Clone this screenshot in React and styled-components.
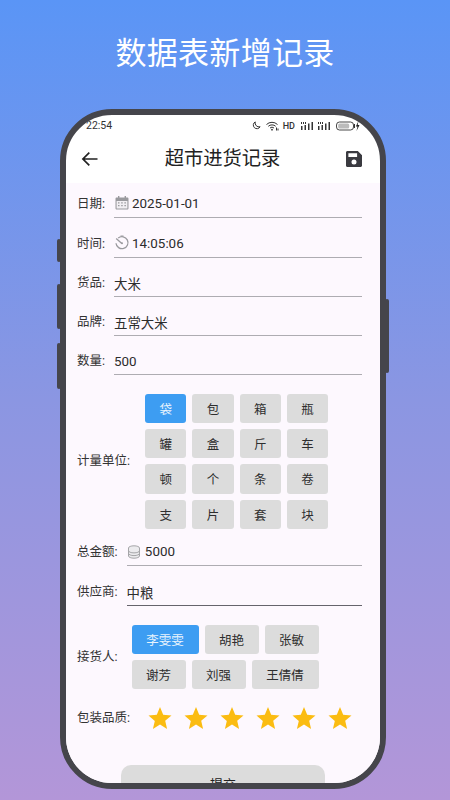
import React from 'react';
import styled, { createGlobalStyle } from 'styled-components';

const Global = createGlobalStyle`
  html, body { margin: 0; padding: 0; height: 800px; overflow: hidden; }
  body { font-family: Roboto, "Noto Sans CJK SC", sans-serif; }
  #root { height: 800px; }
`;
const Page = styled.div`
  width: 450px; height: 800px; overflow: hidden; box-sizing: border-box;
  background: linear-gradient(180deg, #5a95f6 0%, #8b96e2 50%, #b396d8 100%);
  display: flex; flex-direction: column; align-items: center;
`;
const Headline = styled.h1`
  margin: 0; height: 109px; line-height: 108px; font-size: 31px; font-weight: 400; color: #fff;
  letter-spacing: 0.3px; flex: none;
`;
const PhoneWrap = styled.div`
  position: relative; width: 326px; height: 680px; flex: none; margin-right: 4px;
`;
const SideKey = styled.div`
  position: absolute; width: 4px; background: #45454b; border-radius: 2px;
  top: ${p => p.$top}px; height: ${p => p.$h}px;
  ${p => p.$right ? 'right: -3px;' : 'left: -3px;'}
`;
const Phone = styled.div`
  position: relative; box-sizing: border-box; width: 326px; height: 680px; border: 6px solid #45454b;
  border-radius: 52px; background: #fff; overflow: hidden; display: flex; flex-direction: column;
`;
const Status = styled.div`
  height: 20px; flex: none; display: flex; align-items: center; justify-content: space-between;
  padding: 1px 20px 0 20px; box-sizing: border-box; font-size: 10.5px; color: #333;
`;
const StatusIcons = styled.div`display: flex; align-items: center; gap: 3px; color: #333;`;
const Hd = styled.span`font-size: 9px; font-weight: 500; margin: 0 2px 0 1px;`;
const Header = styled.div`
  height: 48px; flex: none; display: flex; align-items: center; justify-content: space-between;
  padding: 0 17px 0 15px; color: #222;
`;
const HeaderTitle = styled.div`font-size: 19.3px; color: #222; line-height: 48px; margin-left: 1px;`;
const Form = styled.div`
  flex: 1; background: #fdf8fe; padding: 0 18px 0 11px; display: flex; flex-direction: column; min-height: 0;
`;
const Row = styled.div`
  display: flex; align-items: ${p => p.$center ? 'center' : 'flex-end'}; margin-top: ${p => p.$top}px; flex: none;
`;
const Label = styled.div`
  font-size: 12.5px; color: #333; flex: none; margin-right: ${p => p.$gap}px;
  line-height: 18px; padding-bottom: ${p => p.$pb || 0}px;
`;
const Field = styled.div`
  flex: 1; height: 27px; box-sizing: border-box; border-bottom: ${p => p.$dark ? '1.5px solid #66646c' : '1px solid #aeacb2'};
  display: flex; align-items: center; gap: ${p => p.$icon ? 2 : 1}px; font-size: 13.4px; color: #2c2c2c;
  padding-bottom: ${p => p.$icon ? 2 : 0}px;
`;
const Chips = styled.div`display: flex; flex-direction: column; gap: 6px;`;
const ChipRow = styled.div`display: flex; gap: 6px;`;
const Chip = styled.div`
  width: ${p => p.$w}px; height: 29.2px; border-radius: 3px; display: flex; align-items: center; justify-content: center;
  font-size: 12.5px; background: ${p => p.$on ? '#3d9df2' : '#dcdcdc'}; color: ${p => p.$on ? '#e8f3fd' : '#2e2e2e'};
`;
const Stars = styled.div`display: flex; gap: 12px;`;
const Submit = styled.div`
  margin: 35px auto 0 44px; width: 204px; height: 44px; flex: none; border-radius: 10px; background: #dcdcdc;
  display: flex; justify-content: center; padding-top: 9px; box-sizing: border-box; font-size: 13px; color: #222;
`;

const Star = () => (
  <svg width="24" height="24" viewBox="0 0 24 24"><path fill="#fbbc12" d="M12 1l3.2 7.7 8.3.7-6.3 5.4 1.9 8.1L12 18.6 4.9 23l1.9-8.1L.5 9.4l8.3-.7z" /></svg>
);
const Calendar = () => (
  <svg width="16" height="16" viewBox="0 0 16 16"><path fill="#9a9a9e" d="M4 1h1.4v1.5h5.2V1H12v1.5h1.2c.8 0 1.3.5 1.3 1.3v9.4c0 .8-.5 1.3-1.3 1.3H2.8c-.8 0-1.3-.5-1.3-1.3V3.8c0-.8.5-1.3 1.3-1.3H4z"/><path fill="#f2eff3" d="M2.6 6h10.8v7.6H2.6z"/><path fill="#9a9a9e" d="M4 7.3h1.5v1.3H4zM7.2 7.3h1.5v1.3H7.2zM10.4 7.3h1.5v1.3h-1.5zM4 10h1.5v1.3H4zM7.2 10h1.5v1.3H7.2zM10.4 10h1.5v1.3h-1.5z"/></svg>
);
const Timer = () => (
  <svg width="16" height="16" viewBox="0 0 16 16" fill="none" stroke="#9a9a9e"><path strokeWidth="1.3" d="M4.2 3A6 6 0 1 1 2 8.2"/><path strokeWidth="1.3" d="M2.2 3.4l5.6 5"/><circle cx="8" cy="8.3" r="1" fill="#9a9a9e" stroke="none"/><path strokeWidth="1" d="M6.5 1h3"/></svg>
);
const Coins = () => (
  <svg width="14" height="14" viewBox="0 0 14 14" fill="#ecebee" stroke="#a5a5a8" strokeWidth="1"><ellipse cx="7" cy="3" rx="5.5" ry="2.2"/><path d="M1.5 3v8c0 1.2 2.5 2.2 5.5 2.2s5.5-1 5.5-2.2V3"/><path d="M1.5 5.7c0 1.2 2.5 2.2 5.5 2.2s5.5-1 5.5-2.2M1.5 8.4c0 1.2 2.5 2.2 5.5 2.2s5.5-1 5.5-2.2" fill="none"/></svg>
);
const Back = () => (
  <svg width="18" height="18" viewBox="0 0 18 18" fill="none" stroke="#222" strokeWidth="1.7"><path d="M16.5 9H2M8.3 2.6 1.9 9l6.4 6.4"/></svg>
);
const Save = () => (
  <svg width="18" height="18" viewBox="0 0 18 18"><path fill="#3a3a40" fillRule="evenodd" d="M2.5 1h10.3L17 5.2v10.3c0 .9-.7 1.5-1.5 1.5h-13c-.9 0-1.5-.6-1.5-1.5v-13C1 1.600 1.600 1 2.500 1zM3.400 3.200v3.700h8.700V3.200zM9 9.500a2.500 2.500 0 1 0 0 5 2.500 2.500 0 0 0 0-5z"/></svg>
);
const Moon = () => (
  <svg width="9" height="9" viewBox="0 0 10 10" fill="none" stroke="#333" strokeWidth="1.1"><path d="M3.600 1a4 4 0 1 0 5.400 5.400A4.400 4.400 0 0 1 3.600 1z"/></svg>
);
const Wifi = () => (
  <svg width="13" height="10" viewBox="0 0 13 10" fill="none" stroke="#333" strokeWidth="1" style={{ marginLeft: 2 }}><path d="M.5 3.500a8 8 0 0 1 11 0M2.300 5.300a5.500 5.500 0 0 1 7.400 0M4 7a3 3 0 0 1 4 0"/><circle cx="6" cy="8.700" r=".9" fill="#333" stroke="none"/><path d="M10.500 6.500v3M12 7.500v2" /></svg>
);
const Signal = () => (
  <svg width="14" height="10" viewBox="0 0 14 10" fill="#333"><path d="M1 1h1v2H1zM3 1h1v2H3zM5 1h1v2H5zM1 5h1.500v4H1zM4.500 4h1.500v5H4.500zM8 2.500h1.500V9H8zM11.500 1H13v8h-1.500z"/></svg>
);
const Battery = () => (
  <svg width="24" height="10" viewBox="0 0 24 10" fill="none" style={{ marginLeft: 2 }}><rect x=".5" y="1" width="17" height="8" rx="3" stroke="#333" strokeWidth=".9"/><rect x="2.200" y="2.500" width="11" height="5" rx="1.500" fill="#bbb"/><path d="M18.500 3v4" stroke="#333"/><path fill="#222" d="M22.500 0 19.800 5.500h1.700L20.500 10l3-6h-1.800z"/></svg>
);

const units = [['袋', '包', '箱', '瓶'], ['罐', '盒', '斤', '车'], ['顿', '个', '条', '卷'], ['支', '片', '套', '块']];
const people = [[['李雯雯', 67], ['胡艳', 54], ['张敏', 54]], [['谢芳', 54], ['刘强', 54], ['王倩倩', 67]]];

export default function App() {
  return (
    <Page>
      <Global />
      <Headline>数据表新增记录</Headline>
      <PhoneWrap>
        <SideKey $top={130} $h={23} />
        <SideKey $top={175} $h={45} />
        <SideKey $top={234} $h={46} />
        <SideKey $right $top={190} $h={74} />
        <Phone>
          <Status>
            <span>22:54</span>
            <StatusIcons>
              <Moon /><Wifi /><Hd>HD</Hd><Signal /><Signal /><Battery />
            </StatusIcons>
          </Status>
          <Header>
            <Back />
            <HeaderTitle>超市进货记录</HeaderTitle>
            <Save />
          </Header>
          <Form>
            <Row $top={8}><Label $gap={9} $pb={5}>日期:</Label><Field $icon><Calendar />2025-01-01</Field></Row>
            <Row $top={13}><Label $gap={9} $pb={5}>时间:</Label><Field $icon><Timer />14:05:06</Field></Row>
            <Row $top={12}><Label $gap={9} $pb={5}>货品:</Label><Field>大米</Field></Row>
            <Row $top={12}><Label $gap={9} $pb={5}>品牌:</Label><Field>五常大米</Field></Row>
            <Row $top={12}><Label $gap={9} $pb={5}>数量:</Label><Field>500</Field></Row>
            <Row $center $top={19}>
              <Label $gap={15}>计量单位:</Label>
              <Chips>
                {units.map((r, i) => (
                  <ChipRow key={i}>{r.map(u => <Chip key={u} $w={41.300} $on={u === '袋'}>{u}</Chip>)}</ChipRow>
                ))}
              </Chips>
            </Row>
            <Row $top={10}><Label $gap={9} $pb={5}>总金额:</Label><Field><Coins />&nbsp;5000</Field></Row>
            <Row $top={13}><Label $gap={9} $pb={5}>供应商:</Label><Field $dark>中粮</Field></Row>
            <Row $center $top={19}>
              <Label $gap={14}>接货人:</Label>
              <Chips>
                {people.map((r, i) => (
                  <ChipRow key={i}>{r.map(([n, w]) => <Chip key={n} $w={w} $on={n === '李雯雯'}>{n}</Chip>)}</ChipRow>
                ))}
              </Chips>
            </Row>
            <Row $center $top={17}>
              <Label $gap={18}>包装品质:</Label>
              <Stars>{[0, 1, 2, 3, 4, 5].map(i => <Star key={i} />)}</Stars>
            </Row>
            <Submit>提交</Submit>
          </Form>
        </Phone>
      </PhoneWrap>
    </Page>
  );
}
